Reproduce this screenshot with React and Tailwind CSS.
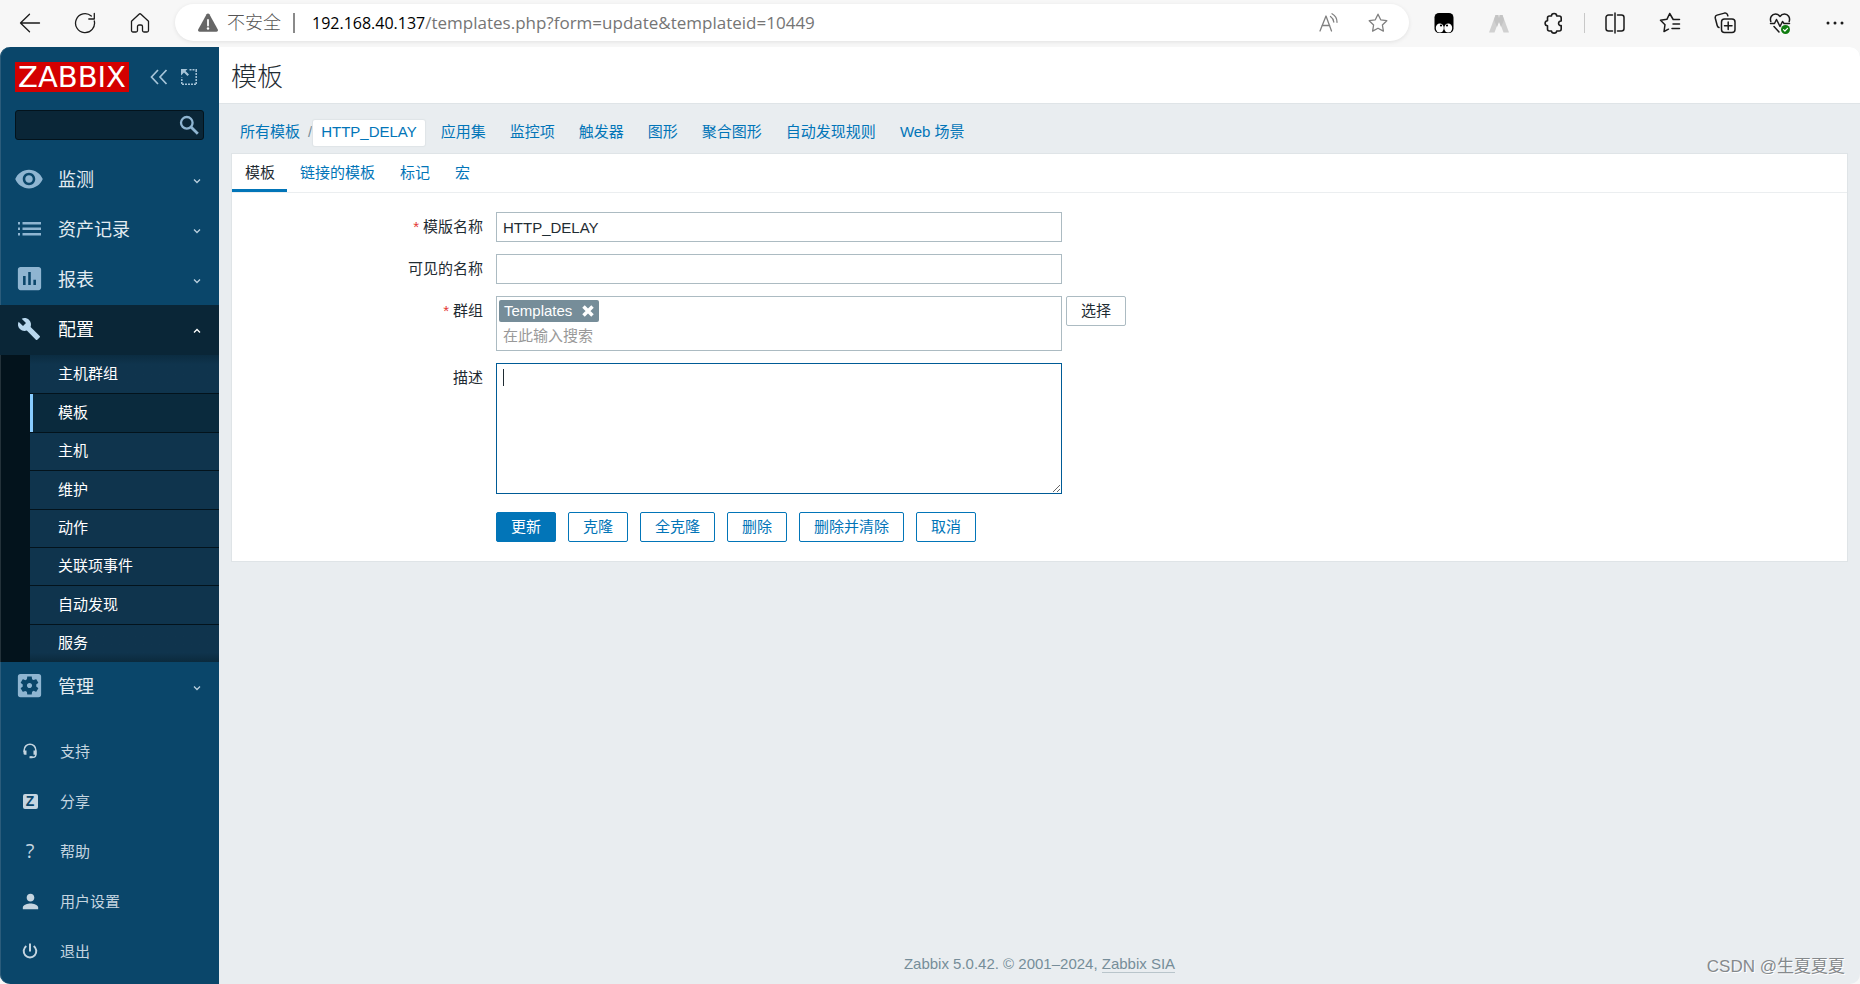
// App.jsx
import { useState } from 'react';
import {
  MdVisibility, MdAssessment, MdBuild, MdSettingsApplications, MdPerson,
} from 'react-icons/md';

const CONFIG_ITEMS = ['主机群组', '模板', '主机', '维护', '动作', '关联项事件', '自动发现', '服务'];
const NAV_LINKS = ['应用集', '监控项', '触发器', '图形', '聚合图形', '自动发现规则', 'Web 场景'];
const TABS = ['模板', '链接的模板', '标记', '宏'];
const ACTIONS = ['更新', '克隆', '全克隆', '删除', '删除并清除', '取消'];

// Thin line icon used by the browser toolbar
function LineIcon({ children, className = '', width = 1.3 }) {
  return (
    <svg
      viewBox="0 0 22 22"
      className={`block h-[22px] w-[22px] ${className}`}
      fill="none"
      stroke="currentColor"
      strokeWidth={width}
      strokeLinecap="round"
      strokeLinejoin="round"
      aria-hidden="true"
    >
      {children}
    </svg>
  );
}

const STAR = 'M11 2.2l2.7 5.6 6.1.9-4.4 4.3 1 6.1L11 16.2l-5.4 2.9 1-6.1L2.2 8.700l6.1-.9z';

function BrowserBar() {
  const [url, setUrl] = useState('/templates.php?form=update&templateid=10449');

  return (
    <header className="flex h-[47px] shrink-0 items-start bg-[#f7f7f7] pr-[14px] pt-1 text-[#1b1b1b]">
      <div className="flex h-[37px] items-center gap-[33px] pl-[19px] pr-[24px]">
        <button type="button" aria-label="后退">
          <LineIcon><path d="M20.500 11H1.500M10.500 2.200L1.500 11l9 8.800" /></LineIcon>
        </button>
        <button type="button" aria-label="刷新">
          <LineIcon><path d="M20.300 9A9.500 9.500 0 1 1 17.300 4M20.300 1.500v5.500h-5.500" /></LineIcon>
        </button>
        <button type="button" aria-label="主页">
          <LineIcon>
            <path d="M2.500 9.300L10 2.200a1.500 1.500 0 0 1 2 0l7.500 7.100v9.200a1.500 1.500 0 0 1-1.500 1.500h-3a1.500 1.500 0 0 1-1.500-1.500v-4a1.500 1.500 0 0 0-1.500-1.500h-2a1.500 1.500 0 0 0-1.500 1.500v4A1.500 1.500 0 0 1 7 20H4a1.500 1.500 0 0 1-1.500-1.500z" />
          </LineIcon>
        </button>
      </div>

      <div className="flex h-[37px] min-w-0 flex-1 items-center rounded-full bg-white pl-[22px] pr-5 shadow-[0_1px_4px_rgba(0,0,0,0.09)]">
        <svg viewBox="0 0 22 20" className="h-5 w-[22px] shrink-0" aria-hidden="true">
          <path d="M9.600 1.300a1.600 1.600 0 0 1 2.800 0l8.400 15.200a1.600 1.600 0 0 1-1.400 2.300H2.600a1.600 1.600 0 0 1-1.400-2.300z" fill="#666" />
          <path d="M11 7v5.500" stroke="#fff" strokeWidth="1.800" strokeLinecap="round" />
          <circle cx="11" cy="15.500" r="1.200" fill="#fff" />
        </svg>
        <span className="ml-2 shrink-0 pt-[2px] text-[18px] font-light text-[#555]">不安全</span>
        <span className="ml-3 mr-[17px] h-5 w-[2px] shrink-0 bg-[#8a8a8a]" />
        <label htmlFor="url" className="shrink-0 font-['Open_Sans','Noto_Sans_CJK_SC',sans-serif] text-base text-black">
          192.168.40.137
        </label>
        <input
          id="url"
          value={url}
          onChange={e => setUrl(e.target.value)}
          className="min-w-0 flex-1 bg-transparent font-['Open_Sans','Noto_Sans_CJK_SC',sans-serif] text-[17px] text-[#757575] outline-none"
        />
        <div className="flex items-center gap-[27px] text-[#808080]">
          <button type="button" aria-label="大声朗读">
            <LineIcon>
              <path d="M2 19L8 4l5.500 15M4 13.500h7.700M12.500 4.500a8 8 0 0 1 3.300 5.500M14 1.800a9.500 9.500 0 0 1 5 8.500" />
            </LineIcon>
          </button>
          <button type="button" aria-label="收藏">
            <LineIcon><path d={STAR} /></LineIcon>
          </button>
        </div>
      </div>

      <div className="flex h-[37px] items-center gap-[33px] pl-[24px]">
        <button type="button" aria-label="扩展一">
          <LineIcon width={0}>
            <rect x="1.500" y="1" width="19" height="20" rx="4.500" fill="#000" />
            <ellipse cx="6.800" cy="16" rx="4" ry="4.600" fill="#fff" />
            <ellipse cx="15.200" cy="16" rx="4" ry="4.600" fill="#fff" />
            <circle cx="8" cy="13.500" r="1.100" fill="#000" />
            <circle cx="14" cy="13.500" r="1.100" fill="#000" />
          </LineIcon>
        </button>
        <button type="button" aria-label="扩展二">
          <LineIcon width={0}>
            <path d="M1 20.500L7.500 3h2.800v7.500L6.500 20.500z" fill="#d0d0d0" />
            <path d="M21 20.500L14.500 3h-2.800v7.500l3.800 10z" fill="#d0d0d0" />
            <path d="M7.500 3h2.800L11 6l.7-3h2.800l1.500 5-3 7-2-5-2 5-3-7z" fill="#c4c4c4" />
          </LineIcon>
        </button>
        <button type="button" aria-label="扩展">
          <LineIcon width={1.600}>
            <path d="M4.500 6a2 2 0 0 1 2-2h2c0-3.300 5.200-3.300 5.200 0h2.500a2 2 0 0 1 2 2v3c-3.300-.4-3.700 5 0 4.600V17a2 2 0 0 1-2 2h-2.500c-.2 2.800-5 2.800-5.200 0h-2a2 2 0 0 1-2-2v-3.200c-3.200-.2-3.200-4.800 0-5z" />
          </LineIcon>
        </button>
        <div className="-mx-[14px] h-5 w-px bg-[#c8c8c8]" />
        <button type="button" aria-label="分屏">
          <LineIcon width={1.500}>
            <path d="M8 3H4.500A2.500 2.500 0 0 0 2 5.500v11A2.500 2.500 0 0 0 4.500 19H8zM14 3h3.500A2.500 2.500 0 0 1 20 5.500v11a2.500 2.500 0 0 1-2.500 2.500H14M11 1v20M8 3v16" stroke="none" />
            <path d="M8.500 3H4.500A2.500 2.500 0 0 0 2 5.500v11A2.500 2.500 0 0 0 4.500 19h4M13.500 3h4A2.500 2.500 0 0 1 20 5.500v11a2.500 2.500 0 0 1-2.500 2.500h-4M11 1v20" />
          </LineIcon>
        </button>
        <button type="button" aria-label="收藏夹">
          <LineIcon width={1.500}>
            <path d="M20.500 7.500h-6.300L10.700 1.500 7.900 7.300l-6.400 1 4.500 4.400-1 6.800 4.500-2.300M14 12h6.500M13 16.500h7.500" />
          </LineIcon>
        </button>
        <button type="button" aria-label="集锦">
          <LineIcon width={1.500}>
            <rect x="7.500" y="7" width="13.500" height="13.500" rx="3" />
            <path d="M14.200 10v7.500M10.500 13.700H18M5 15.500c-1-.3-1.500-.9-1.800-2L1.300 6.200C1 4.600 1.700 3.500 3 3.100l7.500-2c1.600-.3 2.700.5 3.100 1.900l.2.800" />
          </LineIcon>
        </button>
        <button type="button" aria-label="浏览器概要">
          <LineIcon width={1.500}>
            <path d="M1.800 9.500C.5 5.500 3 2 6.500 2c2 0 3.500 1 4.500 2.500C12 3 13.500 2 15.500 2 19 2 21.500 5.500 20.200 9.500M1.500 11.500h4l2-4 3.500 7 2.500-5 1.500 2h5.500M5 14.500l5 5.500" />
            <circle cx="16.500" cy="17.500" r="4.500" fill="#107c10" stroke="none" />
            <path d="M14.500 17.600l1.400 1.400 2.600-2.700" stroke="#fff" strokeWidth="1.200" />
          </LineIcon>
        </button>
        <button type="button" aria-label="更多">
          <LineIcon width={0}>
            <circle cx="4" cy="11" r="1.500" fill="currentColor" />
            <circle cx="11" cy="11" r="1.500" fill="currentColor" />
            <circle cx="18" cy="11" r="1.500" fill="currentColor" />
          </LineIcon>
        </button>
      </div>
    </header>
  );
}

function ListIcon() {
  return (
    <svg viewBox="0 0 24 14" className="h-[14px] w-6" fill="currentColor" aria-hidden="true">
      <path d="M1 0h2v2.500H1zM1 5.500h2V8H1zM1 11h2v2.500H1zM5.500 0H24v2.500H5.500zM5.500 5.500H24V8H5.500zM5.500 11H24v2.500H5.500z" />
    </svg>
  );
}

function HeadsetIcon() {
  return (
    <svg viewBox="0 0 16 16" className="h-4 w-4" fill="none" stroke="currentColor" aria-hidden="true">
      <path d="M2.200 9V7a5.800 5.800 0 0 1 11.600 0v4.500a2.500 2.500 0 0 1-2.500 2.800H8" strokeWidth="1.500" />
      <path d="M1.500 7.500h3v4.300H3A1.500 1.500 0 0 1 1.500 10.300zM11.500 7.500h3v4.300h-3zM7.500 13.300h3v2h-3z" fill="currentColor" stroke="none" />
    </svg>
  );
}

function PowerIcon() {
  return (
    <svg viewBox="0 0 16 16" className="h-4 w-4" fill="none" stroke="currentColor" strokeWidth="2" aria-hidden="true">
      <path d="M8 .5v8M4.300 3a6.300 6.300 0 1 0 7.400 0" />
    </svg>
  );
}

function MenuItem({ icon, label, open }) {
  return (
    <button
      type="button"
      aria-expanded={!!open}
      className={`flex h-[50px] w-full shrink-0 items-center pr-[18px] pt-px text-left text-[18px]
        ${open ? 'bg-[#0a2637] text-white' : 'text-[#e3ecf2]'}`}
    >
      <span className={`flex w-[58px] items-center justify-center pb-1 ${open ? 'text-[#b9d8ee]' : 'text-[#8fb5d1]'}`}>
        {icon}
      </span>
      <span className="flex-1">{label}</span>
      <svg viewBox="0 0 8 6" className="h-[6px] w-2" fill="none" stroke={open ? '#fff' : '#b9cfde'} strokeWidth="1.300" aria-hidden="true">
        <path d={open ? 'M1 4.500L4 1.500l3 3' : 'M1 1.500l3 3 3-3'} />
      </svg>
    </button>
  );
}

function Sidebar() {
  const userLinks = [
    { label: '支持', icon: <HeadsetIcon /> },
    {
      label: '分享',
      icon: (
        <span className="flex h-[15px] w-[15px] items-center justify-center rounded-[2px] bg-[#c5d5e0] font-['Liberation_Sans',sans-serif] text-[14px] font-bold leading-none text-[#0a466a]">
          Z
        </span>
      ),
    },
    { label: '帮助', icon: <span className="font-['Open_Sans',sans-serif] text-xl font-medium leading-none">?</span> },
    { label: '用户设置', icon: <MdPerson size={23} /> },
    { label: '退出', icon: <PowerIcon /> },
  ];

  return (
    <aside className="flex w-[219px] shrink-0 flex-col rounded-l-[10px] bg-[#0a466a] pt-[15px] shadow-[inset_1px_0_0_#2b5c7b]">
      {/* Logo and collapse controls */}
      <div className="flex h-[30px] items-center pl-[15px]">
        <a href="#" className="flex h-[30px] w-[114px] items-center justify-center bg-[#d40000] pt-px font-['DejaVu_Sans',sans-serif] text-[29px] leading-none text-white">
          ZABBIX
        </a>
        <button type="button" aria-label="收起侧边栏" className="ml-[21px] text-[#a6c4d8]">
          <svg viewBox="0 0 18 16" className="h-4 w-[18px]" fill="none" stroke="currentColor" strokeWidth="1.700" aria-hidden="true">
            <path d="M8 1L1.500 8 8 15M16.500 1L10 8l6.500 7" />
          </svg>
        </button>
        <button type="button" aria-label="隐藏侧边栏" className="ml-[13px] text-[#a6c4d8]">
          <svg viewBox="0 0 16 16" className="h-4 w-4" fill="none" stroke="currentColor" aria-hidden="true">
            <path d="M8.500 .8H16M15.200 1v15M15 15.200H0M.8 15V8.500" strokeWidth="1.500" strokeDasharray="2 1" />
            <path d="M0 0h6.500L4.500 2l3.500 3.500L6.500 7 3 3.500 0 6.500z" fill="currentColor" stroke="none" />
          </svg>
        </button>
      </div>

      <form className="relative mx-[15px] mb-[15px] mt-[18px]" onSubmit={e => e.preventDefault()}>
        <input
          type="search"
          aria-label="搜索"
          className="block h-[30px] w-full rounded-[3px] border border-[#03131c] bg-[#0a2637] px-2 text-[15px] text-white outline-none"
        />
        <button type="submit" aria-label="搜索" className="absolute right-[5px] top-[5px] text-[#8fb5d1]">
          <svg viewBox="0 0 20 20" className="h-5 w-5" fill="none" stroke="currentColor" strokeWidth="2.300" aria-hidden="true">
            <circle cx="7.800" cy="7.800" r="5.800" />
            <path d="M12 12l6.800 6.800" strokeWidth="2.800" />
          </svg>
        </button>
      </form>

      {/* Main menu */}
      <nav className="flex flex-col">
        <MenuItem label="监测" icon={<MdVisibility size={30} />} />
        <MenuItem label="资产记录" icon={<ListIcon />} />
        <MenuItem label="报表" icon={<MdAssessment size={31} />} />
        <MenuItem label="配置" icon={<MdBuild size={24} />} open />
        <ul className="grid h-[307px] auto-rows-fr bg-[#03131c] pl-[30px] shadow-[inset_1px_0_0_#24323a]">
          {CONFIG_ITEMS.map((item, i) => (
            <li key={item} className={i === 0 ? 'flex' : 'flex border-t border-[#03131c]'}>
              <a
                href="#"
                className={`flex flex-1 items-center text-[15px] text-white
                  ${item === '模板' ? 'border-l-[3px] border-[#8cf] bg-[#0a2a3d] pl-[25px]' : 'pl-7'}
                  ${i === 0 ? 'bg-linear-to-b from-[#0b2c41] to-[#0f344d] to-25%' : ''}
                  ${i === 7 ? 'bg-linear-to-t from-[#0b2a3d] to-[#0f344d] to-25%' : ''}
                  ${i > 1 && i < 7 ? 'bg-[#0f344d]' : ''}`}
              >
                {item}
              </a>
            </li>
          ))}
        </ul>
        <MenuItem label="管理" icon={<MdSettingsApplications size={31} />} />
      </nav>

      {/* User links */}
      <nav className="mt-[15px] flex flex-col">
        {userLinks.map(link => (
          <a key={link.label} href="#" className="flex h-[50px] items-center text-[15px] text-[#c5d5e0]">
            <span className="flex w-[60px] justify-center pb-[2px]">{link.icon}</span>
            {link.label}
          </a>
        ))}
      </nav>
    </aside>
  );
}

function FormRow({ label, htmlFor, required, children }) {
  return (
    <div className="flex items-start">
      <label htmlFor={htmlFor} className="w-[251px] shrink-0 pt-[3px] text-right leading-6">
        {required && <span className="mr-1 text-[#e33734]">*</span>}
        {label}
      </label>
      <div className="ml-[13px] flex min-w-0 flex-1 items-start">{children}</div>
    </div>
  );
}

function TemplateForm() {
  const [name, setName] = useState('HTTP_DELAY');
  const [visibleName, setVisibleName] = useState('');
  const [description, setDescription] = useState('');

  const field = 'w-full max-w-[566px] border border-[#acbbc2] bg-white px-[6px] outline-none';

  return (
    <form className="flex flex-col gap-3 pb-[19px] pt-[19px]" onSubmit={e => e.preventDefault()}>
      <FormRow label="模版名称" htmlFor="name" required>
        <input id="name" value={name} onChange={e => setName(e.target.value)} className={`h-[30px] ${field}`} />
      </FormRow>
      <FormRow label="可见的名称" htmlFor="visible">
        <input id="visible" value={visibleName} onChange={e => setVisibleName(e.target.value)} className={`h-[30px] ${field}`} />
      </FormRow>
      <FormRow label="群组" htmlFor="groups" required>
        <div className="w-full max-w-[566px] border border-[#acbbc2] px-[2px] py-[3px]">
          <span className="flex h-[22px] w-[100px] items-center justify-between rounded-[2px] bg-[#768d99] px-[5px] text-white">
            Templates
            <button type="button" aria-label="移除 Templates">
              <svg viewBox="0 0 12 12" className="h-3 w-3" stroke="currentColor" strokeWidth="3.500" aria-hidden="true">
                <path d="M1.500 1.500l9 9M10.500 1.500l-9 9" />
              </svg>
            </button>
          </span>
          <input
            id="groups"
            placeholder="在此输入搜索"
            className="mt-[3px] block h-[22px] w-full px-1 pt-px outline-none placeholder:text-[#999]"
          />
        </div>
        <button type="button" className="ml-1 h-[30px] shrink-0 rounded-[2px] border border-[#acbbc2] px-[14px]">
          选择
        </button>
      </FormRow>
      <FormRow label="描述" htmlFor="description">
        <div className="relative w-full max-w-[566px]">
          <textarea
            id="description"
            autoFocus
            value={description}
            onChange={e => setDescription(e.target.value)}
            className="block h-[131px] w-full resize border border-[#005b96] px-[6px] py-1 caret-transparent outline-none"
          />
          {description === '' && <span className="pointer-events-none absolute left-[7px] top-[6px] h-[17px] w-px bg-[#1f2c33]" />}
        </div>
      </FormRow>
      <div className="ml-[264px] flex flex-wrap gap-3 pt-[6px]">
        {ACTIONS.map(action => (
          <button
            type="button"
            key={action}
            className={`h-[30px] rounded-[2px] border border-[#0275b8] px-[14px]
              ${action === '更新' ? 'bg-[#0275b8] text-white' : 'bg-white text-[#0275b8]'}`}
          >
            {action}
          </button>
        ))}
      </div>
    </form>
  );
}

export default function App() {
  return (
    <div className="flex min-h-screen flex-col bg-[#f7f7f7] font-['Liberation_Sans','Noto_Sans_CJK_SC',sans-serif] text-[15px] text-[#1f2c33]">
      <BrowserBar />
      <div className="flex flex-1">
        <Sidebar />
        <main className="relative flex min-w-0 flex-1 flex-col overflow-hidden rounded-r-[10px] bg-[#e9edf0]">
          <header className="flex h-[57px] items-center border-b border-[#dfe4e7] bg-white px-3 pt-[3px]">
            <h1 className="text-[26px] font-light leading-none">模板</h1>
          </header>

          {/* Breadcrumbs */}
          <nav className="flex h-[49px] items-center pl-[21px] pt-2 text-[#0275b8]">
            <a href="#">所有模板</a>
            <span className="ml-2 text-[#768d99]">/</span>
            <a href="#" className="ml-px flex h-[26px] items-center rounded-[2px] bg-white px-2 shadow-[0_0_1px_1px_#dfe4e7]">
              HTTP_DELAY
            </a>
            <div className="ml-4 flex gap-6">
              {NAV_LINKS.map(link => <a key={link} href="#">{link}</a>)}
            </div>
          </nav>

          <section className="mx-3 border border-[#dfe4e7] bg-white">
            <div role="tablist" className="flex h-[39px] border-b border-[#ebeef0]">
              {TABS.map((tab, i) => (
                <button
                  type="button"
                  role="tab"
                  aria-selected={i === 0}
                  key={tab}
                  className={`border-b-[3px] pl-[13px] pr-3 pt-[3px]
                    ${i === 0 ? 'border-[#0275b8]' : 'border-transparent text-[#0275b8]'}`}
                >
                  {tab}
                </button>
              ))}
            </div>
            <TemplateForm />
          </section>

          <footer className="mt-auto pb-[11px] text-center leading-[18px] text-[#768d99]">
            Zabbix 5.0.42. © 2001–2024, <a href="#" className="border-b border-[#b9c5cb]">Zabbix SIA</a>
          </footer>
          <span className="absolute bottom-[5px] right-[15px] text-[17px] leading-6 text-[#85898c] [text-shadow:1px_1px_0_#fff]">
            CSDN @生夏夏夏
          </span>
        </main>
      </div>
    </div>
  );
}
